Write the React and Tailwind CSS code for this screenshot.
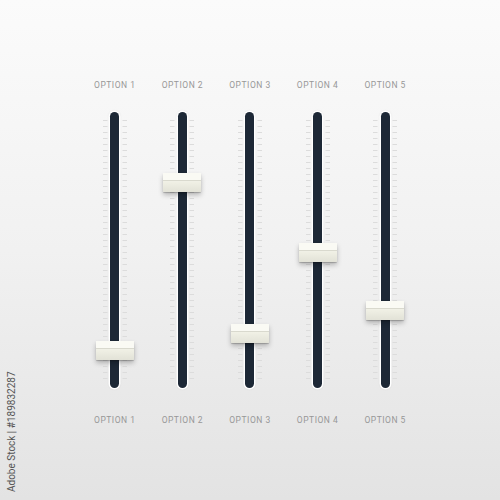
import React from 'react';

const sliders = [
  { label: 'OPTION 1', knob: 239 },
  { label: 'OPTION 2', knob: 71 },
  { label: 'OPTION 3', knob: 222 },
  { label: 'OPTION 4', knob: 141 },
  { label: 'OPTION 5', knob: 199 },
];

// tick marks running down both sides of a track
const Ticks = () => (
  <svg width="24" height="262" className="absolute left-1/2 top-[8px] -translate-x-1/2">
    {Array.from({ length: 44 }).map((_, i) => (
      <g key={i} stroke="#dcdcdc" strokeWidth="1">
        <line x1="0" x2="4.5" y1={i * 6 + 0.5} y2={i * 6 + 0.5} />
        <line x1="19.5" x2="24" y1={i * 6 + 0.5} y2={i * 6 + 0.5} />
      </g>
    ))}
  </svg>
);

const Fader = ({ label, knob }) => (
  <div className="flex flex-col items-center">
    <span className="text-[8.5px] tracking-[0.06em] text-[#979797] leading-none">{label}</span>
    <div className="relative mt-[22px] h-[276px] w-[40px] flex justify-center">
      <Ticks />
      <div className="h-full w-[9px] rounded-full bg-[#1d2836] ring-[1.5px] ring-white shadow-[0_0_3px_rgba(0,0,0,0.25)]" />
      <div
        className="absolute left-1/2 -translate-x-1/2 w-[38px] h-[19px] rounded-[1px] bg-gradient-to-b from-[#fbfbf5] via-[#efefe4] to-[#e2e2d7] shadow-[0_3px_5px_rgba(0,0,0,0.25),0_1px_1px_rgba(0,0,0,0.2)] flex flex-col"
        style={{ top: knob - 10 }}
      >
        <div className="h-[8px] border-b border-[#d9d9ce] bg-[#fafaf4]" />
      </div>
    </div>
    <span className="mt-[28px] text-[8.5px] tracking-[0.06em] text-[#979797] leading-none">{label}</span>
  </div>
);

export default function App() {
  return (
    <div
      className="relative w-[500px] h-[500px] overflow-hidden bg-gradient-to-b from-[#fbfbfb] via-[#f1f1f1] to-[#e3e3e3]"
      style={{ fontFamily: 'Roboto, "Liberation Sans", sans-serif' }}
    >
      <div className="flex justify-center pt-[81px]">
        <div className="grid grid-cols-5 w-[338px] justify-items-center">
          {sliders.map((s) => (
            <Fader key={s.label} {...s} />
          ))}
        </div>
      </div>
      <span className="absolute left-[11px] bottom-[8px] origin-bottom-left -rotate-90 translate-x-[8px] whitespace-nowrap text-[10px] text-[#555]">
        Adobe Stock | #189832287
      </span>
    </div>
  );
}
